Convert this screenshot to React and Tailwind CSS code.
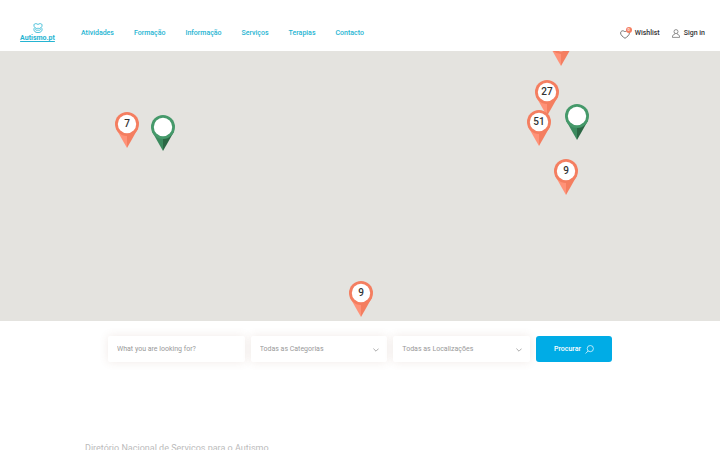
const NAV = ['Atividades', 'Formação', 'Informação', 'Serviços', 'Terapias', 'Contacto']

// x is measured from the centre of the map, y from its top edge
const PINS = [
  { x: -233, y: 61, count: 7 },
  { x: -197, y: 64, color: 'green' },
  { x: 201, y: -21 },
  { x: 187, y: 29, count: 27 },
  { x: 179, y: 59, count: 51 },
  { x: 217, y: 53, color: 'green' },
  { x: 206, y: 108, count: 9 },
  { x: 1, y: 230, count: 9 },
]

const COLORS = {
  coral: { ring: '#f47e60', left: '#ff9278', right: '#f47e60' },
  green: { ring: '#45996a', left: '#3b8a5e', right: '#2b6744' },
}

function Pin({ x, y, count, color = 'coral' }) {
  const c = COLORS[color]
  return (
    <button
      type="button"
      aria-label={count ? `${count} locais` : 'Local'}
      className="absolute h-9 w-6 -translate-x-1/2"
      style={{ left: `calc(50% + ${x}px)`, top: y }}
    >
      <svg viewBox="0 0 24 36" className="h-full w-full" aria-hidden="true">
        <path d="M1.2 17 L12 36 V17 Z" fill={c.left} />
        <path d="M22.8 17 L12 36 V17 Z" fill={c.right} />
        <circle cx="12" cy="12" r="12" fill={c.ring} />
        <circle cx="12" cy="12" r="9.2" fill="#fff" />
      </svg>
      {count && (
        <span className="absolute inset-x-0 top-0 text-center text-[10px] leading-6 font-medium text-[#333]">
          {count}
        </span>
      )}
    </button>
  )
}

function Logo() {
  return (
    <a href="#" className="flex w-[37px] flex-col items-center text-[#25b4d2]">
      <svg viewBox="0 0 10 10" className="h-[10px] w-[10px]" fill="none" stroke="currentColor" strokeWidth="0.8" aria-hidden="true">
        <path d="M5 1.5 C4 0.4 1.2 0.2 0.9 1.9 C0.8 3 1.2 3.9 1.9 4.6 C0.7 5.3 0.7 7 1.4 8 C2.2 9.4 3.6 9.5 5 9.5 C6.4 9.5 7.8 9.4 8.6 8 C9.3 7 9.3 5.3 8.1 4.6 C8.8 3.9 9.2 3 9.1 1.9 C8.8 0.2 6 0.4 5 1.5 Z" />
        <path d="M1.9 4.6 C3 5.6 4.2 5.8 5 5 C5.8 5.8 7 5.6 8.1 4.6 M2.2 6.4 C3.2 7.5 4.4 7.5 5 6.9 C5.6 7.5 6.8 7.5 7.8 6.4" />
      </svg>
      <span className="text-[7px] leading-[11px] font-bold underline">Autismo.pt</span>
    </a>
  )
}

function SelectField({ label }) {
  return (
    <div className="relative rounded-xs bg-white shadow-[0_0_10px_rgba(140,80,60,0.12)]">
      <select aria-label={label} className="block h-[26px] w-full appearance-none px-[9px] text-[7px] text-[#999] outline-none">
        <option>{label}</option>
      </select>
      <svg viewBox="0 0 6 4" className="pointer-events-none absolute top-3 right-2 h-1 w-[6px]" fill="none" stroke="#888" strokeWidth="0.7" aria-hidden="true">
        <path d="M0.4 0.6 L3 3.2 L5.6 0.6" />
      </svg>
    </div>
  )
}

export default function App() {
  return (
    <div className="bg-white font-[Roboto,sans-serif]">
      <header className="flex h-[51px] items-center pt-4 pr-[15px] pl-[19px]">
        <Logo />
        <nav className="ml-[25px] flex gap-5 text-[7px] font-medium text-[#25b4d2]">
          {NAV.map(item => (
            <a key={item} href="#">{item}</a>
          ))}
        </nav>

        <div className="ml-auto flex items-center gap-3 text-[7px] font-medium text-[#333]">
          <a href="#" className="flex items-center gap-1">
            <span className="relative">
              <svg viewBox="0 0 11 10" className="h-[10px] w-[11px]" fill="none" stroke="#555" strokeWidth="0.8" aria-hidden="true">
                <path d="M5 9.3 C2.8 7.8 0.6 6.2 0.6 4 C0.6 1.7 3.5 1 5 3 C6.5 1 9.4 1.7 9.4 4 C9.4 6.2 7.2 7.8 5 9.3 Z" />
              </svg>
              <span className="absolute -top-[2px] -right-[1px] h-[6px] w-[6px] rounded-full bg-[#f47e60] text-center text-[4px] leading-[6px] text-white">0</span>
            </span>
            Wishlist
          </a>
          <a href="#" className="flex items-center gap-1">
            <svg viewBox="0 0 8 9" className="h-[9px] w-2" fill="none" stroke="#666" strokeWidth="0.7" aria-hidden="true">
              <circle cx="4" cy="2.6" r="2" />
              <path d="M2.8 4.5 V5.2 C1.4 5.6 0.4 6 0.4 8.4 H7.6 C7.6 6 6.6 5.6 5.2 5.2 V4.5" />
            </svg>
            Sign in
          </a>
        </div>
      </header>

      {/* Map */}
      <section aria-label="Mapa" className="relative h-[60vh] overflow-hidden bg-[#e4e3df]">
        {PINS.map(pin => (
          <Pin key={`${pin.x}:${pin.y}`} {...pin} />
        ))}
      </section>

      {/* Search */}
      <form className="mx-auto mt-[15px] grid w-[70%] grid-cols-[1fr_1fr_1fr_76px] gap-[6px]" onSubmit={e => e.preventDefault()}>
        <input
          type="text"
          aria-label="What you are looking for?"
          placeholder="What you are looking for?"
          className="h-[26px] w-full rounded-xs bg-white px-[9px] text-[7px] text-[#666] shadow-[0_0_10px_rgba(140,80,60,0.12)] outline-none placeholder:text-[#999]"
        />
        <SelectField label="Todas as Categorias" />
        <SelectField label="Todas as Localizações" />
        <button type="submit" className="flex h-[26px] items-center justify-center gap-1 rounded-[3px] bg-[#00ace6] text-[7px] font-medium text-white">
          Procurar
          <svg viewBox="0 0 9 9" className="h-[9px] w-[9px]" fill="none" stroke="currentColor" strokeWidth="0.7" aria-hidden="true">
            <circle cx="5.3" cy="3.6" r="3.1" />
            <path d="M3.1 5.9 L0.6 8.5" />
          </svg>
        </button>
      </form>

      <footer className="mt-20 px-[85px] text-[9px] leading-3 text-[#bbb]">
        <p>Diretório Nacional de Serviços para o Autismo</p>
      </footer>
    </div>
  )
}
